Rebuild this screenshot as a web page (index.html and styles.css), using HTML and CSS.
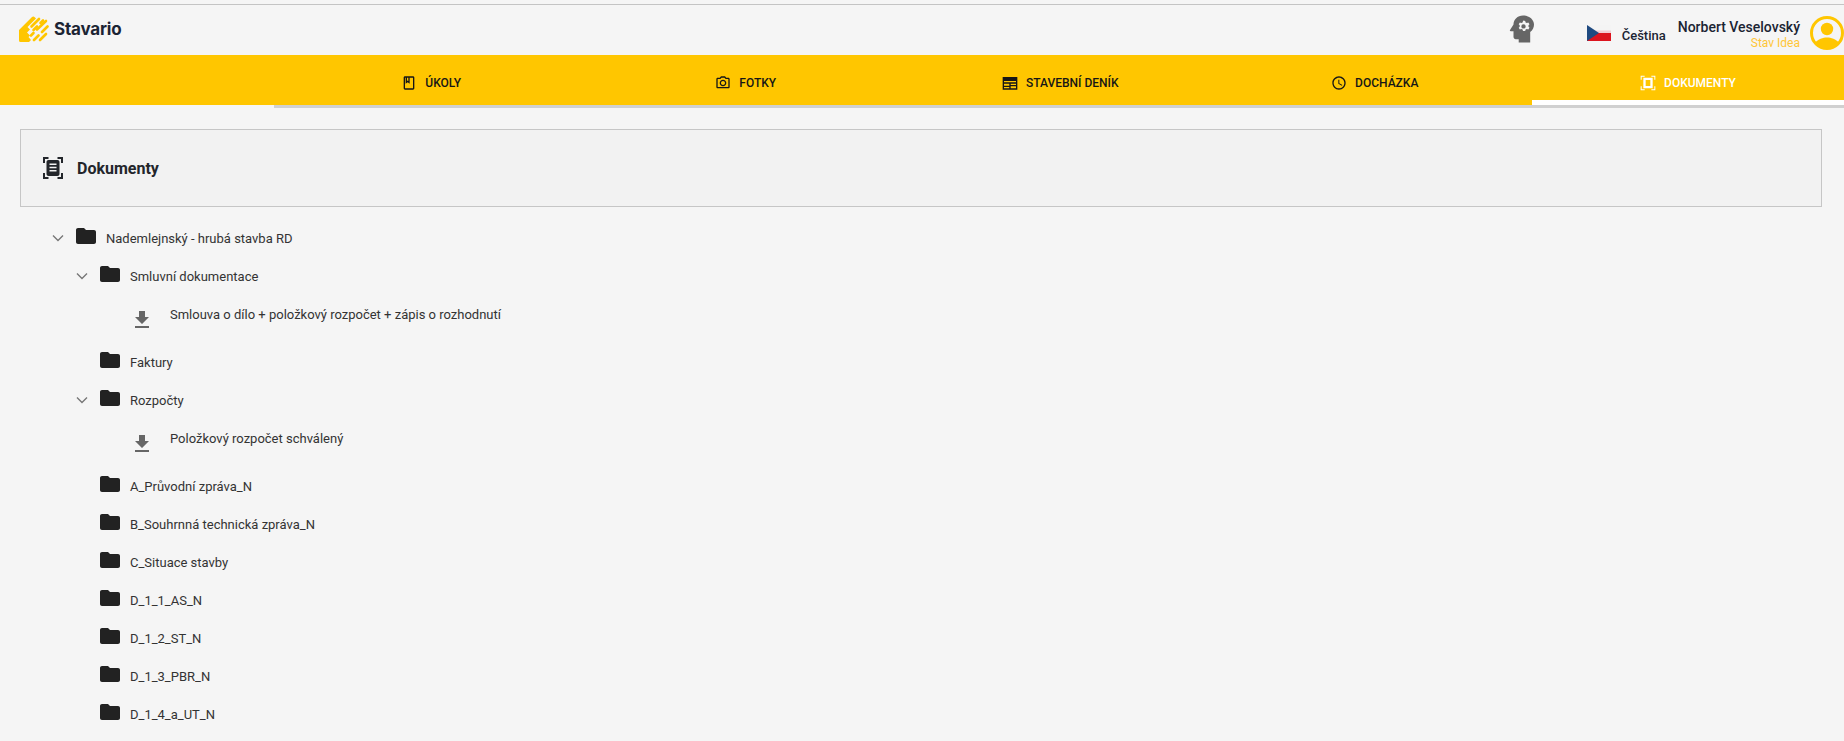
FILE: index.html
```html
<!DOCTYPE html>
<html lang="cs">
<head>
<meta charset="utf-8">
<title>Stavario</title>
<link rel="stylesheet" href="styles.css">
</head>
<body>
<div class="topline"></div>
<header class="header">
  <div class="brand">
    <svg class="logo" viewBox="0 0 30 27" width="30" height="27">
      <path fill="#ffc600" d="M0 14 13 1Q14.500 0 16 1.500L17 2.500 8.500 11 11 13.500 8 16.500 11 19.500 9.500 21 12 24 10 26H1.500Q0 26 0 24.500Z"/>
      <g stroke="#ffc600" stroke-width="2.600" stroke-linecap="round" fill="none">
        <path d="M12.500 10.500 20 3"/>
        <path d="M14.500 14 18 10.500M21.500 7 24 4.500"/>
        <path d="M12 19.500 14.500 17M18 13.500 27 5" stroke-dasharray="20 0"/>
        <path d="M15 24 19.500 19.500M23 16 28.500 10.500"/>
        <path d="M21 24 27 18"/>
      </g>
    </svg>
    <span class="brand-name">Stavario</span>
  </div>
  <svg class="head-icon" viewBox="0 0 26 28" width="26" height="28">
    <path fill="#666" fill-rule="evenodd" d="M14 .5C8.500.5 4.500 4.500 4.500 9.500L1 15c-.4.700 0 1.300.8 1.300h2.700v5.700c0 1.200 1 2.200 2.200 2.200h3v3.300h11.500V17c2.700-1.800 3.800-4.700 3.800-7.500C25 4.500 20 .5 14 .5ZM14.500 5.500l1.700.4.400 1.500 1.300.7 1.400-.5 1.200 1.600-1 1.100v1.400l1 1.100-1.200 1.600-1.400-.5-1.300.7-.4 1.500h-2.200l-.4-1.500-1.300-.7-1.400.5-1.200-1.600 1-1.100v-1.400l-1-1.100 1.200-1.600 1.400.5 1.300-.7.400-1.500ZM14.500 9.200a2.200 2.200 0 1 0 0 4.400 2.200 2.200 0 0 0 0-4.400Z"/>
  </svg>
  <div class="lang">
    <svg class="flag" viewBox="0 0 24 16" width="24" height="16">
      <rect width="24" height="8" fill="#f4f4f4"/>
      <rect y="5.500" width="24" height="2.500" fill="#f2ccd2"/>
      <rect y="8" width="24" height="8" fill="#dc141e"/>
      <path d="M0 0 12 8 0 16Z" fill="#1f4a80"/>
    </svg>
    <span class="lang-name">Čeština</span>
  </div>
  <div class="user">
    <span class="user-name">Norbert Veselovský</span>
    <span class="user-sub">Stav Idea</span>
  </div>
  <svg class="avatar" viewBox="0 0 34 34" width="34" height="34">
    <circle cx="17" cy="17" r="15.500" fill="none" stroke="#ffc600" stroke-width="3"/>
    <circle cx="17" cy="13" r="6.200" fill="#ffc600"/>
    <path d="M5 27c3-4 8-5.500 12-5.500S26 23 29 27c-3 4-7 6-12 6s-9-2-12-6Z" fill="#ffc600"/>
  </svg>
</header>

<nav class="nav">
  <a class="tab">
    <svg class="tab-icon" viewBox="0 0 24 24" width="16" height="16"><path fill="currentColor" d="M18 2H6c-1.100 0-2 .9-2 2v16c0 1.100.9 2 2 2h12c1.100 0 2-.9 2-2V4c0-1.100-.9-2-2-2ZM9 4h2v5l-1-.75L9 9V4Zm9 16H6V4h1v9l3-2.250L13 13V4h5v16Z"/></svg>
    <span>ÚKOLY</span>
  </a>
  <a class="tab">
    <svg class="tab-icon" viewBox="0 0 24 24" width="16" height="16"><path fill="currentColor" d="M20 4h-3.170L15 2H9L7.170 4H4c-1.100 0-2 .9-2 2v12c0 1.100.9 2 2 2h16c1.100 0 2-.9 2-2V6c0-1.100-.9-2-2-2Zm0 14H4V6h4.050l1.830-2h4.240l1.830 2H20v12ZM12 7c-2.760 0-5 2.240-5 5s2.240 5 5 5 5-2.240 5-5-2.240-5-5-5Zm0 8c-1.650 0-3-1.350-3-3s1.350-3 3-3 3 1.350 3 3-1.350 3-3 3Z"/></svg>
    <span>FOTKY</span>
  </a>
  <a class="tab">
    <svg class="tab-icon" viewBox="0 0 24 24" width="16" height="16"><path fill="currentColor" fill-rule="evenodd" d="M1 3h22v19H1V3Zm2 6v2h18V9H3Zm0 4v3h8v-3H3Zm0 5v2h8v-2H3Zm10-5v2h8v-2h-8Zm0 4v3h8v-3h-8Z"/></svg>
    <span>STAVEBNÍ DENÍK</span>
  </a>
  <a class="tab">
    <svg class="tab-icon" viewBox="0 0 24 24" width="16" height="16"><path fill="currentColor" d="M12 2C6.480 2 2 6.480 2 12s4.480 10 10 10 10-4.480 10-10S17.520 2 12 2Zm0 18c-4.420 0-8-3.580-8-8s3.580-8 8-8 8 3.580 8 8-3.580 8-8 8Zm.5-13H11v6l5.250 3.150.75-1.230-4.500-2.670V7Z"/></svg>
    <span>DOCHÁZKA</span>
  </a>
  <a class="tab tab-active">
    <svg class="tab-icon" viewBox="0 0 24 24" width="16" height="16"><path fill="currentColor" fill-rule="evenodd" d="M1 1h6v1.500H2.500V7H1V1Zm16 0h6v6h-1.500V2.500H17V1ZM1 17h1.500v4.500H7V23H1v-6Zm20.500 0H23v6h-6v-1.500h4.500V17ZM5 4h14v16H5V4Zm3.500 3.500v9h7v-9h-7Z"/></svg>
    <span>DOKUMENTY</span>
  </a>
</nav>

<main class="main">
  <section class="panel">
    <svg class="panel-icon" viewBox="0 0 20 22" width="20" height="22">
      <path fill="#23262b" fill-rule="evenodd" d="M0 0h5.500v2H2v4H0V0Zm14.500 0H20v6h-2V2h-3.500V0ZM0 16h2v4h3.500v2H0v-6Zm18 0h2v6h-5.500v-2H18v-4ZM5.500 3h9c1.100 0 2 .9 2 2v12c0 1.100-.9 2-2 2h-9c-1.100 0-2-.9-2-2V5c0-1.100.9-2 2-2Zm1 3.500V8h7V6.500h-7Zm0 3.200v1.500h7V9.700h-7Zm0 3.300v1.500h7V13h-7Z"/>
    </svg>
    <h1 class="panel-title">Dokumenty</h1>
  </section>

  <ul class="tree">
    <li class="row row-root">
      <svg class="chev" viewBox="0 0 12 8" width="12" height="8"><path d="M1 1.500 6 6.500 11 1.500" fill="none" stroke="#777" stroke-width="1.400"/></svg>
      <svg class="folder" viewBox="0 0 20 16" width="20" height="16"><path fill="#222" d="M2 0h6l2 2h8c1.100 0 2 .9 2 2v10c0 1.100-.9 2-2 2H2c-1.100 0-2-.9-2-2V2C0 .9.900 0 2 0Z"/></svg>
      <span class="label">Nademlejnský - hrubá stavba RD</span>
    </li>
    <li class="row row-sub">
      <svg class="chev" viewBox="0 0 12 8" width="12" height="8"><path d="M1 1.500 6 6.500 11 1.500" fill="none" stroke="#777" stroke-width="1.400"/></svg>
      <svg class="folder" viewBox="0 0 20 16" width="20" height="16"><path fill="#222" d="M2 0h6l2 2h8c1.100 0 2 .9 2 2v10c0 1.100-.9 2-2 2H2c-1.100 0-2-.9-2-2V2C0 .9.900 0 2 0Z"/></svg>
      <span class="label">Smluvní dokumentace</span>
    </li>
    <li class="file">
      <svg class="dl" viewBox="0 0 24 24" width="24" height="24"><path fill="#666" d="M19 9h-4V3H9v6H5l7 7 7-7ZM5 18v2h14v-2H5Z"/></svg>
      <span class="label">Smlouva o dílo + položkový rozpočet + zápis o rozhodnutí</span>
    </li>
    <li class="row row-sub row-leaf">
      <svg class="folder" viewBox="0 0 20 16" width="20" height="16"><path fill="#222" d="M2 0h6l2 2h8c1.100 0 2 .9 2 2v10c0 1.100-.9 2-2 2H2c-1.100 0-2-.9-2-2V2C0 .9.900 0 2 0Z"/></svg>
      <span class="label">Faktury</span>
    </li>
    <li class="row row-sub">
      <svg class="chev" viewBox="0 0 12 8" width="12" height="8"><path d="M1 1.500 6 6.500 11 1.500" fill="none" stroke="#777" stroke-width="1.400"/></svg>
      <svg class="folder" viewBox="0 0 20 16" width="20" height="16"><path fill="#222" d="M2 0h6l2 2h8c1.100 0 2 .9 2 2v10c0 1.100-.9 2-2 2H2c-1.100 0-2-.9-2-2V2C0 .9.900 0 2 0Z"/></svg>
      <span class="label">Rozpočty</span>
    </li>
    <li class="file">
      <svg class="dl" viewBox="0 0 24 24" width="24" height="24"><path fill="#666" d="M19 9h-4V3H9v6H5l7 7 7-7ZM5 18v2h14v-2H5Z"/></svg>
      <span class="label">Položkový rozpočet schválený</span>
    </li>
    <li class="row row-sub row-leaf">
      <svg class="folder" viewBox="0 0 20 16" width="20" height="16"><path fill="#222" d="M2 0h6l2 2h8c1.100 0 2 .9 2 2v10c0 1.100-.9 2-2 2H2c-1.100 0-2-.9-2-2V2C0 .9.900 0 2 0Z"/></svg>
      <span class="label">A_Průvodní zpráva_N</span>
    </li>
    <li class="row row-sub row-leaf">
      <svg class="folder" viewBox="0 0 20 16" width="20" height="16"><path fill="#222" d="M2 0h6l2 2h8c1.100 0 2 .9 2 2v10c0 1.100-.9 2-2 2H2c-1.100 0-2-.9-2-2V2C0 .9.900 0 2 0Z"/></svg>
      <span class="label">B_Souhrnná technická zpráva_N</span>
    </li>
    <li class="row row-sub row-leaf">
      <svg class="folder" viewBox="0 0 20 16" width="20" height="16"><path fill="#222" d="M2 0h6l2 2h8c1.100 0 2 .9 2 2v10c0 1.100-.9 2-2 2H2c-1.100 0-2-.9-2-2V2C0 .9.900 0 2 0Z"/></svg>
      <span class="label">C_Situace stavby</span>
    </li>
    <li class="row row-sub row-leaf">
      <svg class="folder" viewBox="0 0 20 16" width="20" height="16"><path fill="#222" d="M2 0h6l2 2h8c1.100 0 2 .9 2 2v10c0 1.100-.9 2-2 2H2c-1.100 0-2-.9-2-2V2C0 .9.900 0 2 0Z"/></svg>
      <span class="label">D_1_1_AS_N</span>
    </li>
    <li class="row row-sub row-leaf">
      <svg class="folder" viewBox="0 0 20 16" width="20" height="16"><path fill="#222" d="M2 0h6l2 2h8c1.100 0 2 .9 2 2v10c0 1.100-.9 2-2 2H2c-1.100 0-2-.9-2-2V2C0 .9.900 0 2 0Z"/></svg>
      <span class="label">D_1_2_ST_N</span>
    </li>
    <li class="row row-sub row-leaf">
      <svg class="folder" viewBox="0 0 20 16" width="20" height="16"><path fill="#222" d="M2 0h6l2 2h8c1.100 0 2 .9 2 2v10c0 1.100-.9 2-2 2H2c-1.100 0-2-.9-2-2V2C0 .9.900 0 2 0Z"/></svg>
      <span class="label">D_1_3_PBR_N</span>
    </li>
    <li class="row row-sub row-leaf">
      <svg class="folder" viewBox="0 0 20 16" width="20" height="16"><path fill="#222" d="M2 0h6l2 2h8c1.100 0 2 .9 2 2v10c0 1.100-.9 2-2 2H2c-1.100 0-2-.9-2-2V2C0 .9.900 0 2 0Z"/></svg>
      <span class="label">D_1_4_a_UT_N</span>
    </li>
  </ul>
</main>
</body>
</html>
```

FILE: styles.css
```css
* { box-sizing: border-box; }
html, body { margin: 0; height: 741px; overflow: hidden; }
body {
  background: #f5f5f5;
  font-family: Roboto, "Liberation Sans", sans-serif;
  color: #1f2630;
}
.topline { height: 5px; border-bottom: 1px solid #c4c4c4; }
.header {
  height: 50px;
  display: flex;
  align-items: center;
  padding-left: 19px;
}
.brand { display: flex; align-items: center; gap: 5px; margin-right: auto; margin-top: -1px; }
.logo { display: block; }
.brand-name { font: 700 17px/1 Inter, "Open Sans", sans-serif; color: #1b2433; letter-spacing: -.2px; }
.head-icon { display: block; margin-right: 52px; margin-top: -3px; }
.lang { display: flex; align-items: center; gap: 11px; margin-right: 12px; margin-top: 6px; }
.flag { display: block; }
.lang-name { font-size: 13px; font-weight: 500; color: #1b2433; padding-top: 4px; }
.user { display: flex; flex-direction: column; align-items: flex-end; margin-right: 10px; margin-top: 9px; }
.user-name { font-size: 14px; font-weight: 500; line-height: 18px; color: #1b2433; }
.user-sub { font-size: 12px; line-height: 15px; color: #ffc637; }
.avatar { display: block; flex: none; margin-top: 5px; }

.nav {
  height: 50px;
  background: #ffc600;
  display: grid;
  grid-template-columns: repeat(4, 314.5px) 312px;
  padding-left: 274px;
}
.tab {
  display: flex;
  align-items: center;
  justify-content: center;
  gap: 8px;
  font-size: 12px;
  font-weight: 500;
  color: #161616;
  height: 50px;
  padding-top: 6px;
  box-shadow: 0 3px 0 #d0d0d0;
}
.tab-icon { display: block; flex: none; }
.tab-active { color: #fff; border-bottom: 5px solid #fff; padding-top: 11px; }

.main { padding: 24px 22px 0 20px; }
.panel {
  height: 78px;
  background: #f2f2f2;
  border: 1px solid #c6c6c6;
  display: flex;
  align-items: center;
  gap: 14px;
  padding-left: 22px;
}
.panel-icon { display: block; flex: none; }
.panel-title { margin: 0; font-size: 16px; font-weight: 700; color: #23262b; }

.tree { list-style: none; margin: 12px 0 0; padding: 0; font-size: 13px; color: #333; }
.row { display: flex; align-items: center; height: 38px; }
.row-root { padding-left: 32px; }
.row-sub { padding-left: 56px; }
.row-leaf { padding-left: 80px; }
.row .chev { flex: none; margin-right: 12px; }
.folder { display: block; flex: none; margin-right: 10px; margin-top: -4px; }
.file { display: flex; height: 48px; padding: 2px 0 0 110px; }
.dl { display: block; flex: none; margin: 11px 16px 0 0; }
.file .label { line-height: 18px; margin-top: 9px; }
```
